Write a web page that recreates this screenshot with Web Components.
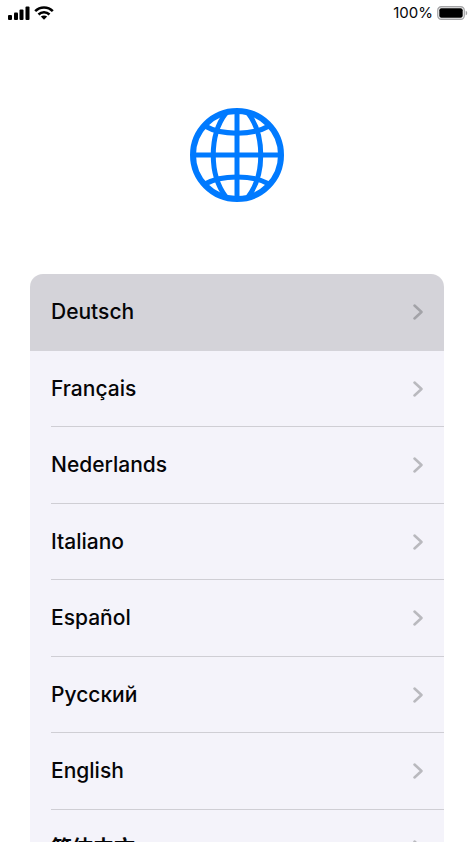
<!DOCTYPE html>
<html lang="en">
<head>
<meta charset="utf-8">
<meta name="viewport" content="width=device-width, initial-scale=1">
<title>Language</title>
<style>
html, body { height: 100%; margin: 0; background: #fff; }
body { font-family: Inter, "Noto Sans CJK SC", sans-serif; color: #050507; overflow: hidden; }
</style>
</head>
<body>
<setup-screen>
  <status-bar slot="status" level="100%"></status-bar>
  <globe-icon slot="hero"></globe-icon>
  <language-list>
    <language-row lang="de" selected>Deutsch</language-row>
    <language-row lang="fr">Français</language-row>
    <language-row lang="nl">Nederlands</language-row>
    <language-row lang="it">Italiano</language-row>
    <language-row lang="es">Español</language-row>
    <language-row lang="ru">Русский</language-row>
    <language-row lang="en">English</language-row>
    <language-row lang="zh-Hans">简体中文</language-row>
  </language-list>
</setup-screen>
<script>
const define = (name, html, setup) => {
  const template = document.createElement('template');
  template.innerHTML = html;
  customElements.define(name, class extends HTMLElement {
    constructor() {
      super();
      this.attachShadow({ mode: 'open' }).append(template.content.cloneNode(true));
    }
    connectedCallback() { if (setup) setup(this); }
  });
};

define('setup-screen', `
  <style>
    :host { display: flex; flex-direction: column; height: 100vh; }
    header { flex: none; height: 26px; }
    .hero { flex: none; display: flex; justify-content: center; padding: 82px 0 72px; }
    main { flex: 1; min-height: 0; padding: 0 30px 1px; display: flex; }
  </style>
  <header><slot name="status"></slot></header>
  <div class="hero"><slot name="hero"></slot></div>
  <main><slot></slot></main>`);

define('status-bar', `
  <style>
    :host { display: flex; justify-content: space-between; align-items: center; height: 26px; padding: 0 6px 0 8px; box-sizing: border-box; font-size: 15px; line-height: 20px; }
    div { display: flex; align-items: center; gap: 4px; }
    svg { display: block; }
  </style>
  <div>
    <svg width="22" height="14" viewBox="0 0 22 14" aria-label="Signal" role="img">
      <rect x="0" y="9" width="4" height="5" rx="1"/><rect x="6" y="6.500" width="4" height="7.500" rx="1"/>
      <rect x="11.500" y="3.500" width="4" height="10.500" rx="1"/><rect x="17.500" y="0.500" width="4" height="13.500" rx="1"/>
    </svg>
    <svg width="20" height="14" viewBox="0 0 20 14" aria-label="Wi-Fi" role="img">
      <g fill="none" stroke="#000" stroke-width="2.500"><path d="M1.200 5.200C6 .2 14 .2 18.800 5.200"/><path d="M4.500 8.500C7.500 5.500 12.500 5.500 15.500 8.500"/></g>
      <path d="M10 13.800 6.800 10.600C8.500 9 11.500 9 13.200 10.600Z"/>
    </svg>
  </div>
  <div>
    <span></span>
    <svg width="31" height="14" viewBox="0 0 31 14" aria-label="Battery" role="img">
      <rect x=".75" y=".75" width="26.500" height="12.500" rx="3.500" fill="none" stroke="#a5a5a7" stroke-width="1.300"/>
      <rect x="2.300" y="2.300" width="23.400" height="9.400" rx="2"/>
      <path d="M28.700 4.700c2 .7 2 3.900 0 4.600Z" fill="#a5a5a7"/>
    </svg>
  </div>`, el => { el.shadowRoot.querySelector('span').textContent = el.getAttribute('level'); });

define('globe-icon', `
  <style>:host { display: block; } svg { display: block; }</style>
  <svg width="94" height="94" viewBox="0 0 94 94" fill="none" stroke="#007aff" stroke-width="5" aria-hidden="true">
    <circle cx="47" cy="47" r="44" stroke-width="6"/>
    <path d="M47 3V91M3 47H91"/>
    <path d="M36 5C19 27 19 67 36 89M58 5C75 27 75 67 58 89"/>
    <path d="M15 18C31 27.500 63 27.500 79 18M15 76C31 66.500 63 66.500 79 76"/>
  </svg>`);

define('language-list', `
  <style>
    :host { display: block; flex: 1; min-width: 0; overflow-y: auto; scrollbar-width: none; background: #f4f3fa; border-radius: 13px 13px 0 0; }
    ::slotted(*) { --row: 77px; }
    ::slotted(:nth-child(even)) { --row: 76px; }
  </style>
  <slot></slot>`);

define('language-row', `
  <style>
    :host { display: block; }
    button { display: flex; flex-direction: column; width: 100%; height: var(--row); padding: 0 0 0 21px; border: 0; background: none; font: inherit; font-size: 21px; font-weight: 500; line-height: 28px; color: inherit; text-align: left; }
    .line { flex: 1; align-self: stretch; display: flex; align-items: center; justify-content: space-between; padding-right: 21px; border-bottom: 1px solid #cfced4; }
    svg { display: block; color: #b9b9be; }
    :host(:lang(zh)) button { font-weight: 700; }
    :host([selected]) { background: #d4d3d9; }
    :host([selected]) .line { border-color: transparent; }
    :host([selected]) svg { color: #a3a3a8; }
  </style>
  <button type="button">
    <span class="line"><slot></slot>
      <svg width="10" height="16" viewBox="0 0 10 16" fill="none" stroke="currentColor" stroke-width="2.500" stroke-linecap="round" stroke-linejoin="round" aria-hidden="true"><path d="M1.500 1.500 8.500 8 1.500 14.500"/></svg>
    </span>
  </button>`);
</script>
</body>
</html>
